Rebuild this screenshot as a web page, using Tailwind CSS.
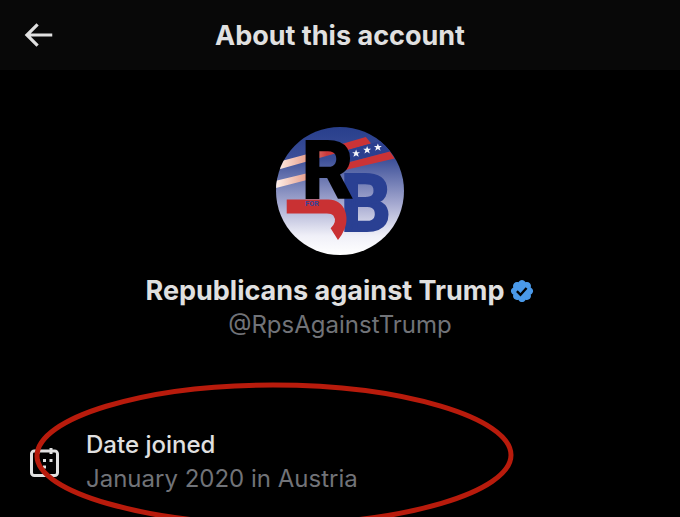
<!doctype html>
<html lang="en">

<head>
  <meta charset="UTF-8" />
  <meta name="viewport" content="width=device-width, initial-scale=1.0" />
  <title>About this account</title>
  <script src="https://cdn.jsdelivr.net/npm/@tailwindcss/browser@4"></script>
</head>

<body class="bg-black text-[#e0e0e0] font-['Inter',sans-serif] min-h-screen overflow-hidden">
  <header class="grid grid-cols-[38px_1fr_38px] items-center h-[70px] px-[19px] bg-[#080808]">
    <button type="button" aria-label="Back" class="cursor-pointer">
      <svg class="size-[38px]" viewBox="0 0 24 24" fill="currentColor">
        <path d="M7.414 13l5.043 5.04-1.414 1.42L3.586 12l7.457-7.46 1.414 1.42L7.414 11H21v2H7.414z" />
      </svg>
    </button>
    <h1 class="pt-0.5 text-center text-[27px] leading-8 font-bold">About this account</h1>
  </header>

  <main>
    <section class="flex flex-col items-center pt-[57px]">
      <!-- Avatar -->
      <svg class="size-32" viewBox="34 36 382 382" role="img" aria-label="Profile picture">
        <defs>
          <linearGradient id="sky" x1="0" y1="0" x2="0" y2="1">
            <stop offset="0" stop-color="#283f8c" />
            <stop offset="0.25" stop-color="#3c4f98" />
            <stop offset="0.6" stop-color="#a5a9d0" />
            <stop offset="0.85" stop-color="#f0f0f8" />
            <stop offset="1" stop-color="#ffffff" />
          </linearGradient>
          <linearGradient id="stripe" gradientUnits="userSpaceOnUse" x1="34" y1="0" x2="250" y2="0">
            <stop offset="0" stop-color="#fff0e8" />
            <stop offset="0.4" stop-color="#e8a594" />
            <stop offset="0.7" stop-color="#cc3a3c" />
            <stop offset="1" stop-color="#cb3336" />
          </linearGradient>
          <clipPath id="round">
            <circle cx="225" cy="227" r="191" />
          </clipPath>
        </defs>
        <g clip-path="url(#round)">
          <rect x="34" y="36" width="382" height="382" fill="url(#sky)" />
          <path d="M30 143L120 119L302 66L318 85L250 104L30 166Z" fill="url(#stripe)" />
          <path d="M250 105L350 76L380 108L250 141Z" fill="#2b3f8f" />
          <path d="M30 197L130 173L374 109L388 130L250 162L30 219Z" fill="url(#stripe)" />
          <g fill="#f4f4fa">
            <path id="star" d="M273 103l3 8 9 0-7 5 3 9-8-5-8 5 3-9-7-5 9 0z" />
            <use href="#star" x="33" y="-10" />
            <use href="#star" x="65" y="-18" />
          </g>
          <text x="226" y="347" class="text-[238px] font-bold font-['Roboto',sans-serif]" fill="#2a4093" stroke="#2a4093" stroke-width="6">B</text>
          <path d="M66 252H190C240 252 255 305 238 342Q232 357 219 373L197 338Q218 318 205 300Q200 294 186 294H66Z" fill="#c93133" />
          <text x="110" y="249" class="text-[240px] font-bold font-['Roboto',sans-serif]" fill="#000" stroke="#000" stroke-width="6">R</text>
          <text x="121" y="272" class="text-[22px] font-bold font-['Roboto',sans-serif]" fill="#33449a">FOR</text>
        </g>
      </svg>

      <div class="flex items-center gap-1 mt-4">
        <h2 class="text-[27px] leading-10 font-bold">Republicans against Trump</h2>
        <svg class="size-[26px]" viewBox="0 0 24 24" role="img" aria-label="Verified account">
          <path fill="#4a99e9" d="M22.25 12c0-1.43-.88-2.67-2.19-3.34.46-1.39.2-2.9-.81-3.91s-2.52-1.27-3.91-.81c-.66-1.31-1.91-2.19-3.34-2.19s-2.67.88-3.33 2.19c-1.4-.46-2.91-.2-3.92.81s-1.26 2.52-.8 3.91c-1.31.67-2.2 1.91-2.2 3.34s.89 2.67 2.2 3.34c-.46 1.39-.21 2.9.8 3.91s2.52 1.26 3.91.81c.67 1.31 1.91 2.19 3.34 2.19s2.68-.88 3.34-2.19c1.39.45 2.9.2 3.91-.81s1.27-2.52.81-3.91c1.31-.67 2.19-1.91 2.19-3.34z" />
          <path fill="none" stroke="#000" stroke-width="2.2" d="M7.3 12.2l3.3 3.3 5.6-6.2" />
        </svg>
      </div>
      <p class="text-2xl leading-7 text-[#717378]">@RpsAgainstTrump</p>
    </section>

    <section class="relative flex items-center gap-[27px] mt-[89px] px-[30px]">
      <svg class="size-[29px]" viewBox="0 0 29 29" fill="currentColor" aria-hidden="true">
        <rect x="1.5" y="3" width="26" height="24.5" rx="2.8" fill="none" stroke="currentColor" stroke-width="3" />
        <path d="M6.5 0h3v6h-3zM19.5 0h3v6h-3zM6.5 11h3v3h-3zM13 11h3v3h-3zM19.5 11h3v3h-3zM13 17.5h3v3h-3z" />
      </svg>
      <dl class="text-2xl leading-[34px]">
        <dt class="font-medium">Date joined</dt>
        <dd class="text-[#717378]">January 2020 in Austria</dd>
      </dl>
      <!-- Hand drawn marker around the row -->
      <svg class="absolute left-[34px] -top-[46px] w-[480px] h-[146px]" viewBox="0 0 480 146" fill="none" aria-hidden="true">
        <path d="M3 74C3 36 109 3 239 3S477 36 477 73S370 142 241 142S3 110 3 74Z" stroke="#b81b0c" stroke-width="5" />
      </svg>
    </section>
  </main>
</body>

</html>
